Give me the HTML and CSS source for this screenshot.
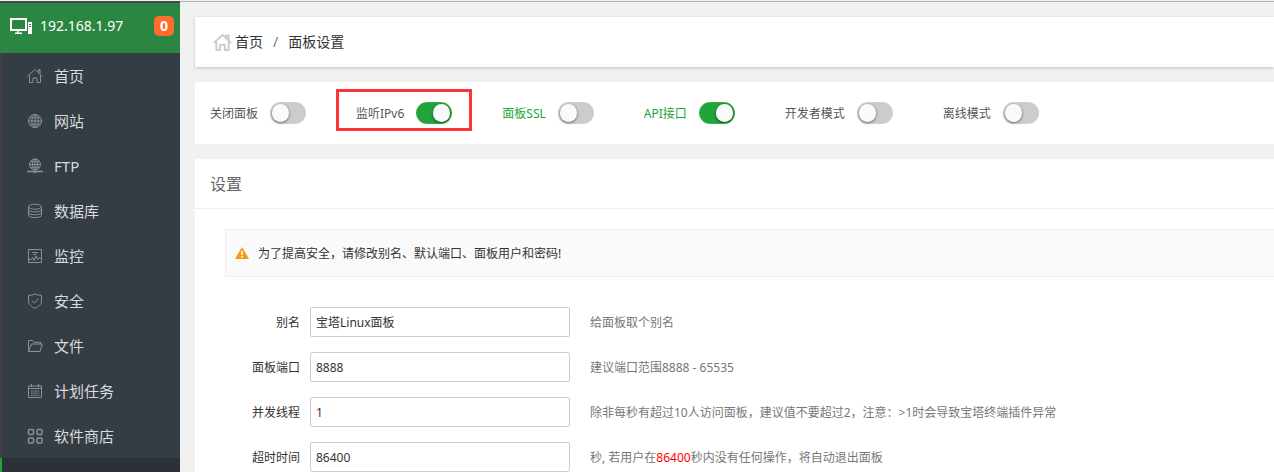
FILE: index.html
```html
<!DOCTYPE html>
<html lang="zh-CN">
<head>
<meta charset="utf-8">
<meta name="viewport" content="width=device-width, initial-scale=1">
<title>面板设置</title>
<link rel="stylesheet" href="styles.css">
</head>
<body>
<div class="layout">
  <aside class="sidebar">
    <header class="host">
      <svg class="host-icon" viewBox="0 0 24 18" fill="none" stroke="currentColor">
        <rect x="1" y="2" width="15" height="11" stroke-width="2"/>
        <path d="M8 13v3M5 16.200h7" stroke-width="1.500"/>
        <rect x="18" y="5" width="4" height="12" fill="currentColor" stroke="none"/>
        <path d="M19 7.500h2M19 9.500h2" stroke="#2b8641" stroke-width="1"/>
      </svg>
      <span class="host-name">192.168.1.97</span>
      <span class="badge">0</span>
    </header>
    <nav>
      <ul class="menu">
        <li><a href="#home"><svg class="menu-icon" viewBox="0 0 16 16"><path d="M.5 8.500 8 1.500l7.500 7M2.500 7.500v7h3.500v-4.500h4v4.500h3.500v-7M11.500 4.500v-3h1.500v4.500"/></svg>首页</a></li>
        <li><a href="#site"><svg class="menu-icon" viewBox="0 0 16 16"><circle cx="8" cy="8" r="6.500"/><ellipse cx="8" cy="8" rx="3.200" ry="6.500"/><path d="M8 1.500v13M1.500 8h13M2.500 4.800h11M2.500 11.200h11"/></svg>网站</a></li>
        <li><a href="#ftp"><svg class="menu-icon" viewBox="0 0 16 16"><circle cx="8" cy="6.500" r="5.500"/><ellipse cx="8" cy="6.500" rx="2.700" ry="5.500"/><path d="M8 1v11M2.500 6.500h11M3.500 3.800h9M3.500 9.200h9"/><path d="M0 13.500h16M6 14h4" stroke-width="1.600"/></svg>FTP</a></li>
        <li><a href="#database"><svg class="menu-icon" viewBox="0 0 16 16"><ellipse cx="8" cy="3.700" rx="6.500" ry="2.500"/><path d="M1.500 3.700v8.600c0 3 13 3 13 0V3.700M1.500 6.600c0 3 13 3 13 0M1.500 9.500c0 3 13 3 13 0"/></svg>数据库</a></li>
        <li><a href="#control"><svg class="menu-icon" viewBox="0 0 16 16"><path d="M1.500 1.500h13v13h-13zM5 4.500h6M6.500 6.500h3M2 11.500h2l1.500-2 1.500 3 2-4.500 1.500 3.500 1-1.500H14"/></svg>监控</a></li>
        <li><a href="#firewall"><svg class="menu-icon" viewBox="0 0 16 16"><path d="M8 .7C6 2 4 2.300 1.500 2.400v5.400c0 3.700 3 6 6.500 7.500 3.500-1.500 6.500-3.800 6.500-7.500V2.400C12 2.300 10 2 8 .7zM4.700 7.500l2.600 2.700 4.200-4.700"/></svg>安全</a></li>
        <li><a href="#files"><svg class="menu-icon" viewBox="0 0 16 16"><path d="M1.500 13.500v-11h4.300l1.400 1.800h6.300v2M1.500 13.500h11.500l2.300-7.500H4.500z"/></svg>文件</a></li>
        <li><a href="#crontab"><svg class="menu-icon" viewBox="0 0 16 16"><path d="M1.500 3h13v11.500h-13zM1.500 5.500h13M4.500 1v3M11.500 1v3"/><path d="M4 8h8.500M4 10.200h8.500M4 12.400h8.500" stroke-dasharray="1.600 .6"/></svg>计划任务</a></li>
        <li><a href="#soft"><svg class="menu-icon" viewBox="0 0 16 16"><g stroke-width="1.500"><rect x="1.500" y="1.500" width="5" height="5" rx="1"/><rect x="10" y="1.500" width="5" height="5" rx="1"/><rect x="1.500" y="10" width="5" height="5" rx="1"/><rect x="10" y="10" width="5" height="5" rx="1"/></g></svg>软件商店</a></li>
        <li class="active"><a href="#config" aria-label="面板设置"></a></li>
      </ul>
    </nav>
  </aside>

  <main class="main">
    <nav class="card breadcrumb">
      <svg class="crumb-icon" viewBox="0 0 20 20"><path d="M1 10.500 10 2l9 8.500M3.500 9.500v8.500h4v-5.500h5v5.500h4V9.500M14 5V2.500h2.500V8"/></svg>
      <a href="#home">首页</a>
      <span class="slash">/</span>
      <span>面板设置</span>
    </nav>

    <section class="card switches">
      <div class="switch-item"><label for="close">关闭面板</label><input class="switch" type="checkbox" id="close"></div>
      <div class="switch-item marked"><label for="ipv6">监听IPv6</label><input class="switch" type="checkbox" id="ipv6" checked></div>
      <div class="switch-item link"><label for="ssl">面板SSL</label><input class="switch" type="checkbox" id="ssl"></div>
      <div class="switch-item link"><label for="api">API接口</label><input class="switch" type="checkbox" id="api" checked></div>
      <div class="switch-item"><label for="dev">开发者模式</label><input class="switch" type="checkbox" id="dev"></div>
      <div class="switch-item"><label for="offline">离线模式</label><input class="switch" type="checkbox" id="offline"></div>
    </section>

    <section class="card settings">
      <h1 class="title">设置</h1>
      <div class="panel">
        <p class="notice">
          <svg class="warn-icon" viewBox="0 0 14 12"><path d="M7 0 14 12H0z" fill="#f39c12"/><path d="M7 4v4M7 9v1.500" stroke="#fff" stroke-width="1.600"/></svg>
          <span class="notice-text">为了提高安全，请修改别名、默认端口、面板用户和密码!</span>
        </p>
        <form class="form">
          <div class="row"><label for="alias">别名</label><input class="field" type="text" id="alias" value="宝塔Linux面板"><span class="hint">给面板取个别名</span></div>
          <div class="row"><label for="port">面板端口</label><input class="field" type="text" id="port" value="8888"><span class="hint">建议端口范围8888 - 65535</span></div>
          <div class="row"><label for="threads">并发线程</label><input class="field" type="text" id="threads" value="1"><span class="hint">除非每秒有超过10人访问面板，建议值不要超过2，注意：&gt;1时会导致宝塔终端插件异常</span></div>
          <div class="row"><label for="timeout">超时时间</label><input class="field" type="text" id="timeout" value="86400"><span class="hint">秒, 若用户在<em>86400</em>秒内没有任何操作，将自动退出面板</span></div>
        </form>
      </div>
    </section>
  </main>
</div>
</body>
</html>
```
FILE: styles.css
```css
* { box-sizing: border-box; }

body {
  margin: 0;
  height: 100vh;
  padding-top: 1px;
  overflow: hidden;
  background: #f1f1f1;
  color: #333;
  font: 12px/20px "Noto Sans", "Noto Sans CJK SC", sans-serif;
}

a { color: inherit; text-decoration: none; }

.layout {
  display: flex;
  min-height: 100%;
  border-top: 1px solid #b0b3b2;
}

/* Sidebar */
.sidebar {
  flex: 0 0 180px;
  margin-top: -1px;
  border-top: 2px solid #3f4a4c;
  background: #353d44;
}

.host {
  display: flex;
  align-items: center;
  height: 50px;
  padding: 0 6px 4px 10px;
  background: #2b8641;
  color: #fff;
  font-size: 14px;
}

.host-icon { width: 24px; height: 18px; margin-right: 6px; }
.host-name { flex: 1; }

.badge {
  width: 20px;
  border-radius: 5px;
  background: #ff6c2b;
  font-weight: bold;
  text-align: center;
}

.menu { margin: 0; padding: 0; list-style: none; }

.menu a {
  display: flex;
  align-items: center;
  gap: 11px;
  height: 45px;
  padding-left: 25px;
  border-left: 2px solid #453f3e;
  color: #d8dadc;
  font-size: 15px;
}

.menu .active a { border-color: #20a53a; background: #2c3138; }

.menu-icon {
  width: 16px;
  height: 16px;
  fill: none;
  stroke: #8d9194;
  stroke-width: 1;
}

/* Content */
.main {
  flex: 1;
  min-width: 0;
  display: flex;
  flex-direction: column;
  gap: 15px;
  padding: 15px 0 0 15px;
}

.card { background: #fff; }

.breadcrumb {
  display: flex;
  align-items: center;
  height: 50px;
  padding-left: 18px;
  box-shadow: 0 1px 3px rgba(0, 0, 0, .2);
  font-size: 14px;
}

.crumb-icon {
  width: 19px;
  height: 19px;
  margin-right: 3px;
  fill: none;
  stroke: #ccc;
  stroke-width: 2;
}

.slash { margin: 0 10px; color: #777; }

.switches {
  display: flex;
  align-items: center;
  gap: 50px;
  height: 62px;
  padding-left: 15px;
  white-space: nowrap;
  color: #555;
}

.switch-item {
  position: relative;
  display: flex;
  align-items: center;
  gap: 12px;
}

.switch-item label { padding-top: 2px; }

.link { color: #20a53a; }

.marked::after {
  content: "";
  position: absolute;
  inset: -13px -20px -7px;
  border: 3px solid #fc3438;
  pointer-events: none;
}

.switch {
  appearance: none;
  display: flex;
  width: 36px;
  height: 22px;
  margin: 0;
  padding: 2px;
  border-radius: 11px;
  background: #ccc;
  box-shadow: inset 0 0 1px #eee;
}

.switch::after {
  content: "";
  width: 17px;
  height: 18px;
  border-radius: 9px;
  background: #fafafa;
  box-shadow: 0 1px 3px rgba(0, 0, 0, .5);
}

.switch:checked { justify-content: flex-end; background: #20a53a; }

.settings { flex: 1; }

.title {
  height: 50px;
  margin: 0;
  padding-left: 15px;
  border-bottom: 1px solid #eee;
  color: #666;
  font-size: 16px;
  font-weight: normal;
  line-height: 50px;
}

.panel { padding: 20px 0 0 30px; }

.notice {
  display: flex;
  align-items: center;
  gap: 9px;
  height: 48px;
  margin: 0 0 30px;
  padding-left: 9px;
  border: 1px solid #eee;
  border-right: 0;
  background: #fafafa;
}

.notice-text { padding-top: 2px; }

.warn-icon { width: 14px; height: 12px; }

.form { display: grid; gap: 15px; }

.row {
  display: grid;
  grid-template-columns: 85px 260px 1fr;
  align-items: center;
}

.row label { padding: 2px 10px 0 0; text-align: right; }

.field {
  width: 100%;
  height: 30px;
  padding: 0 5px;
  border: 1px solid #ccc;
  border-radius: 2px;
  background: #fff;
  color: #333;
  font: inherit;
}

.hint { padding: 2px 0 0 20px; color: #777; white-space: nowrap; }
.hint em { color: #f00; font-style: normal; }
```
